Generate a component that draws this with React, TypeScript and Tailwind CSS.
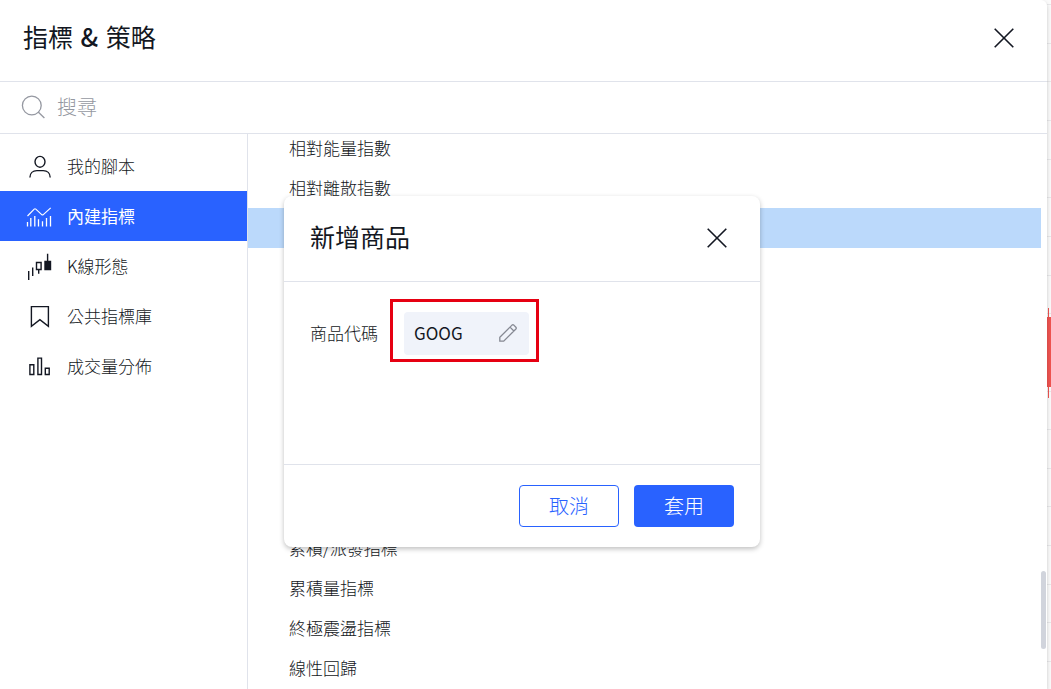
import React from "react";
import clsx from "clsx";

interface MenuItem {
  label: string;
  icon: React.ReactNode;
  active?: boolean;
}

interface IndicatorRow {
  id: number;
  name: string;
  selected?: boolean;
}

const MenuIcon = ({ children }: { children: React.ReactNode }) => (
  <svg
    className="w-7 h-7 shrink-0"
    viewBox="0 0 28 28"
    fill="none"
    stroke="currentColor"
    strokeWidth="1.4"
    aria-hidden="true"
  >
    {children}
  </svg>
);

const CloseIcon = () => (
  <svg
    className="w-5 h-5"
    viewBox="0 0 20 20"
    fill="none"
    stroke="currentColor"
    strokeWidth="1.6"
    aria-hidden="true"
  >
    <path d="M.7 .7l18.6 18.6M19.3 .7L.7 19.3" />
  </svg>
);

const menu: MenuItem[] = [
  {
    label: "我的腳本",
    icon: (
      <MenuIcon>
        <ellipse cx="14" cy="9.8" rx="5" ry="5.4" />
        <path d="M3.9 25.5c0-4.2 3-6.9 7-6.9h6.3c4 0 7 2.7 7 6.9" />
      </MenuIcon>
    ),
  },
  {
    label: "內建指標",
    active: true,
    icon: (
      <MenuIcon>
        <path
          strokeWidth="1.2"
          d="M1.5 14L8.2 7.1q.8-.7 1.6 0l5.9 5.5q.8.7 1.6 0l7.4-6.7"
        />
        <path
          strokeWidth="1.3"
          d="M1.5 20v4.500M4.800 16v8.500M8.800 14v10.500M12.500 17.200v7.300M16.500 19.200v5.300M20.500 16v8.500M24.500 14v10.500"
        />
      </MenuIcon>
    ),
  },
  {
    label: "K線形態",
    icon: (
      <MenuIcon>
        <path d="M2.7 19v9M6.7 15.5V24M12.7 17.5v4.3M21.6 1.7V9" />
        <path d="M10.5 10.5h4.6v7h-4.6z" />
        <path d="M19 9.5h5.5v8H19z" fill="currentColor" />
      </MenuIcon>
    ),
  },
  {
    label: "公共指標庫",
    icon: (
      <MenuIcon>
        <path d="M5.4 4.6h17v19.8L13.9 17.6l-8.5 6.8z" />
      </MenuIcon>
    ),
  },
  {
    label: "成交量分佈",
    icon: (
      <MenuIcon>
        <path d="M3.9 12.7h3.9v9.8H3.9zM11.9 6.1h3.6v16.4h-3.6zM19.3 16.3h3.9v6.2h-3.9z" />
      </MenuIcon>
    ),
  },
];

const rows: IndicatorRow[] = [
  { id: 1, name: "相對能量指數" },
  { id: 2, name: "相對離散指數" },
  { id: 3, name: "", selected: true },
  { id: 4, name: "" },
  { id: 5, name: "" },
  { id: 6, name: "" },
  { id: 7, name: "" },
  { id: 8, name: "" },
  { id: 9, name: "" },
  { id: 10, name: "" },
  { id: 11, name: "累積/派發指標" },
  { id: 12, name: "累積量指標" },
  { id: 13, name: "終極震盪指標" },
  { id: 14, name: "線性回歸" },
];

const gridLines = Array.from({ length: 18 }, (_, i) => 4 + i * 38.65);

const ChartEdge = () => (
  <svg className="w-1 h-full shrink-0 bg-[#fafafa]" aria-hidden="true">
    {gridLines.map((y) => (
      <rect key={y} x="0" y={Math.round(y)} width="4" height="1" fill="#e8e8ea" />
    ))}
    <rect x="1" y="308" width="1" height="90" fill="#ef5350" />
    <rect x="0" y="317" width="4" height="70" fill="#ef5350" />
  </svg>
);

const Sidebar = () => (
  <nav className="w-[248px] shrink-0 border-r border-[#e0e3eb] pt-[7px]">
    {menu.map((item) => (
      <button
        key={item.label}
        type="button"
        className={clsx(
          "flex items-center gap-[13px] w-full h-[50px] pl-[26px] text-[17px] leading-6",
          item.active ? "bg-[#2962ff] text-white font-normal" : "text-[#131722]"
        )}
      >
        {item.icon}
        {item.label}
      </button>
    ))}
  </nav>
);

const SymbolDialog = () => (
  <section
    role="dialog"
    aria-labelledby="dialog-title"
    className="w-[476px] h-[351px] flex flex-col bg-white rounded-lg shadow-[0_2px_5px_rgba(0,0,0,0.25)]"
  >
    <header className="flex items-center justify-between h-[86px] pl-[26px] pr-[33px] pb-0.5 border-b border-[#e0e3eb]">
      <h2 id="dialog-title" className="pb-1 text-[25px] leading-8 font-normal">
        新增商品
      </h2>
      <button type="button" aria-label="關閉">
        <CloseIcon />
      </button>
    </header>
    <div className="flex-1 px-[26px] pt-[30px]">
      <div className="flex items-center gap-6">
        <label htmlFor="symbol" className="w-[70px] pb-0.5 whitespace-nowrap text-[17px] leading-6">
          商品代碼
        </label>
        <div className="relative flex items-center w-[125px] h-[43px] pl-[10px] pr-3 pb-0.5 rounded bg-[#f0f3fa]">
          <input
            id="symbol"
            defaultValue="GOOG"
            className="w-0 flex-1 bg-transparent outline-none text-[17px] leading-6 font-normal"
          />
          <button type="button" aria-label="編輯" className="text-[#868993]">
            <svg
              className="w-[18px] h-[18px]"
              viewBox="0 0 18 18"
              fill="none"
              stroke="currentColor"
              strokeWidth="1.3"
              aria-hidden="true"
            >
              <path d="M.8 17.2v-3.9L13 1.1q.9-.8 1.8 0l2.1 2.1q.8.9 0 1.8L4.700 17.2zM11 3.100l3.900 3.900" />
            </svg>
          </button>
          <div className="absolute -top-[13px] -bottom-[7px] -left-[14px] -right-[10px] border-3 border-[#e60012] pointer-events-none" />
        </div>
      </div>
    </div>
    <footer className="flex items-center justify-end gap-[15px] h-[83px] pr-[26px] border-t border-[#e0e3eb]">
      <button
        type="button"
        className="w-[100px] h-[42px] rounded border border-[#2962ff] text-[#2962ff] text-[20px] leading-6"
      >
        取消
      </button>
      <button
        type="button"
        className="w-[100px] h-[42px] rounded bg-[#2962ff] text-white text-[20px] leading-6"
      >
        套用
      </button>
    </footer>
  </section>
);

const App = () => {
  return (
    <div className="flex h-screen overflow-hidden bg-[#fafafa] text-[#131722] font-light font-['Noto_Sans_CJK_TC','Noto_Sans',sans-serif]">
      <main className="relative z-10 flex flex-col flex-1 min-w-0 bg-white rounded-tr-md shadow-[0_2px_4px_rgba(0,0,0,0.2)]">
        <header className="flex items-center justify-between h-[82px] pl-[23px] pr-[33px] pb-1.5 border-b border-[#e0e3eb]">
          <h1 className="pb-1 text-[25px] leading-8 font-normal">
            指標 <span className="mx-0.5 font-medium">&amp;</span> 策略
          </h1>
          <button type="button" aria-label="關閉">
            <CloseIcon />
          </button>
        </header>
        <div className="flex items-center gap-3 h-[52px] pl-[21px] pb-0.5 border-b border-[#e0e3eb]">
          <svg
            className="w-6 h-6 shrink-0 text-[#9598a1]"
            viewBox="0 0 24 24"
            fill="none"
            stroke="currentColor"
            strokeWidth="1.3"
            aria-hidden="true"
          >
            <circle cx="10.800" cy="10.500" r="9.400" />
            <path d="M17.200 17l6.200 6" />
          </svg>
          <input
            type="search"
            aria-label="搜尋"
            placeholder="搜尋"
            className="flex-1 bg-transparent outline-none text-[20px] leading-6 placeholder:text-[#9598a1]"
          />
        </div>
        <div className="flex flex-1 min-h-0">
          <Sidebar />
          <div className="relative flex-1 overflow-hidden">
            <ul className="-mt-1.5 mr-1.5">
              {rows.map((row) => (
                <li
                  key={row.id}
                  className={clsx(
                    "flex items-center h-10 pl-[41px] text-[17px] leading-6",
                    row.selected && "bg-[#bbd9fb]"
                  )}
                >
                  {row.name}
                </li>
              ))}
            </ul>
            <div className="absolute right-px bottom-10 w-[5px] h-[78px] rounded-full bg-[#d1d4dc]" />
          </div>
        </div>
        <div className="absolute inset-x-0 top-[196px] pr-[3px] flex justify-center">
          <SymbolDialog />
        </div>
      </main>
      <ChartEdge />
    </div>
  );
};

export default App;
